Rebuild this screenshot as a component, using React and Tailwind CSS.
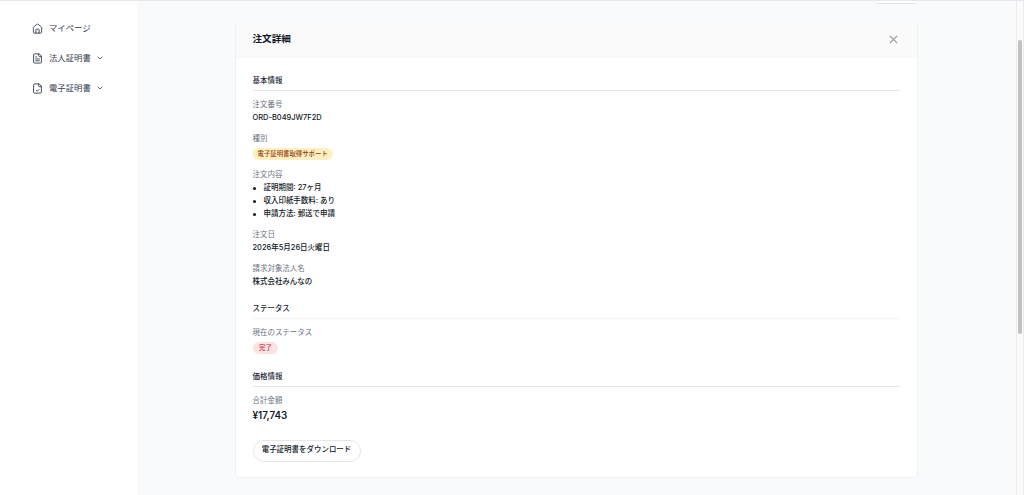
import { ChevronDown, X } from "lucide-react";

const details = ["証明期間: 27ヶ月", "収入印紙手数料: あり", "申請方法: 郵送で申請"];

function HomeIcon() {
  return (
    <svg viewBox="0 0 24 24" className="size-[11px] shrink-0" fill="none" stroke="currentColor" strokeWidth="2" strokeLinecap="round" strokeLinejoin="round">
      <path d="M3 10.5a2.5 2.5 0 0 1 1-2l6.5-5.6a2.3 2.3 0 0 1 3 0L20 8.5a2.5 2.5 0 0 1 1 2V20a2 2 0 0 1-2 2H5a2 2 0 0 1-2-2z" />
      <path d="M8.5 22v-7.5a1 1 0 0 1 1-1h5a1 1 0 0 1 1 1V22" />
    </svg>
  );
}

function FileIcon({ check }) {
  return (
    <svg viewBox="0 0 24 24" className="size-[11px] shrink-0" fill="none" stroke="currentColor" strokeWidth="2" strokeLinecap="round" strokeLinejoin="round">
      <path d="M15 2H5.5a2 2 0 0 0-2 2v16a2 2 0 0 0 2 2h13a2 2 0 0 0 2-2V7.5z" />
      {check ? (
        <path d="M14.5 2v4a2 2 0 0 0 2 2h4M9.5 16l2 2 4-4" />
      ) : (
        <path d="M14.5 2v4a2 2 0 0 0 2 2h4M8 8.5h2M8 13h8M8 17h8" />
      )}
    </svg>
  );
}

function NavItem({ icon, label, open }) {
  return (
    <a className="flex h-[30px] items-center text-[#374151]">
      {icon}
      <span className="ml-[6px] text-[8.4px] whitespace-nowrap">{label}</span>
      {open && <ChevronDown className="ml-[5px] size-[8px]" strokeWidth={2.5} />}
    </a>
  );
}

function Section({ title, line = "border-[#e5e7eb]", children }) {
  return (
    <section>
      <h3 className={`h-[15px] border-b font-medium text-[#1f2937] ${line}`}>{title}</h3>
      <div className="mt-[8.8px] flex flex-col gap-[10.6px]">{children}</div>
    </section>
  );
}

function Field({ label, children }) {
  return (
    <div>
      <div className="text-[#6b7280]">{label}</div>
      <div className="mt-[2.1px] font-medium text-[#111827]">{children}</div>
    </div>
  );
}

function Badge({ color, children }) {
  return (
    <div className="flex h-[13px] items-end">
      <span className={`flex h-[12px] items-center rounded-full text-[6.4px] leading-none ${color}`}>
        {children}
      </span>
    </div>
  );
}

export default function App() {
  return (
    <div className="flex h-[495px] w-[1024px] overflow-hidden border-t border-[#e5e7eb] bg-[#f8fafc] font-['Inter','Noto_Sans_CJK_JP',sans-serif]">
      <aside className="w-[137px] shrink-0 bg-white pt-[12px] pl-[32px]">
        <NavItem icon={<HomeIcon />} label="マイページ" />
        <NavItem icon={<FileIcon />} label="法人証明書" open />
        <NavItem icon={<FileIcon check />} label="電子証明書" open />
      </aside>

      <main className="min-w-0 flex-1 pl-[98px]">
        <div className="flex h-[22px] w-[682px] items-start justify-end">
          <div className="h-[3px] w-[41px] rounded-b-[3px] border-b border-[#dfe2e6] bg-white" />
        </div>
        <div className="h-[455px] w-[683px] overflow-hidden rounded-b-[4px] border border-t-0 border-[#f0f1f3] bg-white">
          <header className="flex h-[35px] items-center justify-between bg-[#fafafa] pr-[17px] pb-[3px] pl-[16.5px]">
            <h2 className="text-[9.6px] leading-none font-bold text-[#111827]">注文詳細</h2>
            <X className="size-[13px] text-[#9ca3af]" strokeWidth={2.2} />
          </header>

          <div className="flex flex-col gap-[17px] pt-[18.2px] pr-[17px] pl-[16.5px] text-[7.47px] leading-[10.67px]">
            <Section title="基本情報">
              <Field label="注文番号">ORD-B049JW7F2D</Field>
              <Field label="種別">
                <Badge color="bg-[#fef0c0] px-[5px] text-[#92400e]">電子証明書取得サポート</Badge>
              </Field>
              <Field label="注文内容">
                <ul className="flex list-none flex-col gap-[2.1px]">
                  {details.map((item) => (
                    <li key={item} className="flex items-center">
                      <span className="mr-[8px] size-[3px] rounded-full bg-[#111827]" />
                      {item}
                    </li>
                  ))}
                </ul>
              </Field>
              <Field label="注文日">2026年5月26日火曜日</Field>
              <Field label="請求対象法人名">株式会社みんなの</Field>
            </Section>

            <Section title="ステータス" line="border-[#f3f4f6]">
              <Field label="現在のステータス">
                <Badge color="bg-[#fee2e2] px-[6.5px] text-[#c5283d]">完了</Badge>
              </Field>
            </Section>

            <div className="pt-[1px]">
              <Section title="価格情報">
                <Field label="合計金額">
                  <div className="pt-[2px] text-[9.8px] font-semibold">¥17,743</div>
                </Field>
              </Section>
            </div>

            <button className="mt-[1.5px] flex h-[22px] w-[108px] items-center justify-center rounded-full border border-[#e5e7eb] bg-white font-medium whitespace-nowrap text-[#111827]">
              電子証明書をダウンロード
            </button>
          </div>
        </div>
      </main>

      <div className="w-[8px] shrink-0 border-x border-[#ececec] bg-[#fafafa] pt-[39px] pl-px">
        <div className="h-[294px] w-[4px] rounded-full bg-[#c1c1c1]" />
      </div>
    </div>
  );
}
